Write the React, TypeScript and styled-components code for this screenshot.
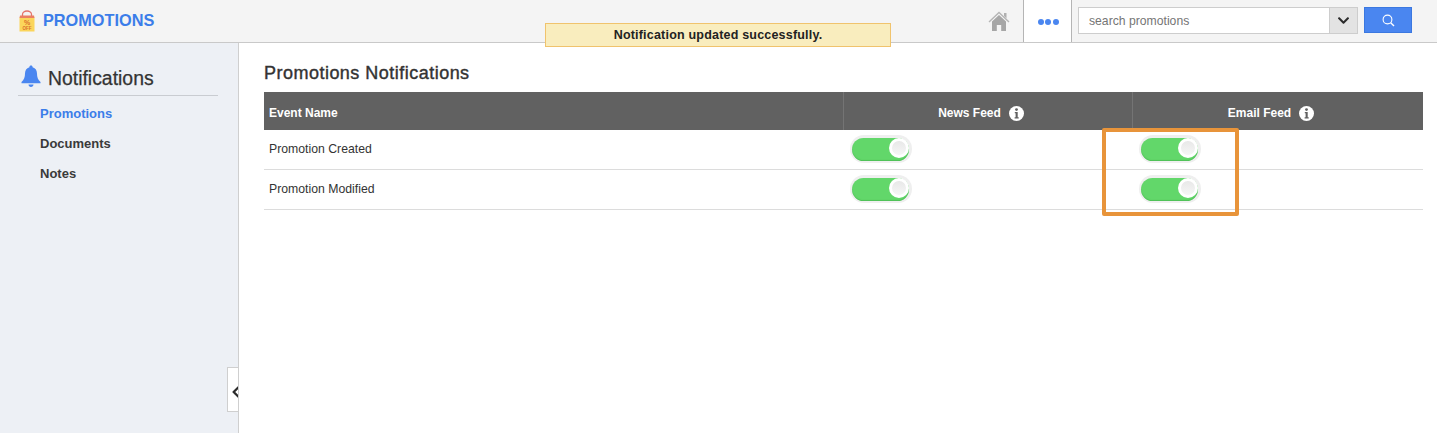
import React from 'react'
import styled, { createGlobalStyle } from 'styled-components'
import { FaChevronDown, FaChevronLeft } from 'react-icons/fa'

const GlobalStyle = createGlobalStyle`
	html, body {
		margin: 0;
		padding: 0;
		background: #fff;
		font-family: "Liberation Sans", Arial, sans-serif;
	}
`

const Page = styled.div`
	position: relative;
	width: 1437px;
	height: 433px;
	overflow: hidden;
	display: flex;
	flex-direction: column;
`

const Header = styled.header`
	display: flex;
	align-items: stretch;
	height: 42px;
	flex: none;
	background: #f4f4f4;
	border-bottom: 1px solid #c9c9c9;
`

const Brand = styled.div`
	display: flex;
	align-items: center;
	gap: 7px;
	padding: 0 0 1px 18px;
	color: #3b7de9;
	font-size: 16.3px;
	font-weight: 700;
	flex: 1;
`

const HomeCell = styled.div`
	display: flex;
	align-items: center;
	justify-content: center;
	width: 22px;
	margin-right: 13px;
`

const MoreCell = styled.div`
	display: flex;
	align-items: center;
	justify-content: center;
	gap: 1.5px;
	width: 49px;
	padding: 2px 0 0 1px;
	box-sizing: border-box;
	background: #fff;
	border-left: 1px solid #b5b5b5;
	border-right: 1px solid #b5b5b5;
`

const Dot = styled.span`
	width: 6px;
	height: 6px;
	border-radius: 50%;
	background: #4a86f0;
`

const SearchBox = styled.div`
	display: flex;
	align-self: flex-start;
	width: 280px;
	height: 27px;
	margin: 7px 6px 0;
	box-sizing: border-box;
	background: #fff;
	border: 1px solid #cdcdcd;
`

const SearchText = styled.div`
	flex: 1;
	padding-left: 10px;
	line-height: 26px;
	font-size: 12.2px;
	color: #757575;
`

const SearchCaret = styled.div`
	display: flex;
	align-items: center;
	justify-content: center;
	width: 27px;
	background: #e3e3e3;
	border-left: 1px solid #cdcdcd;
	color: #2b2b2b;
`

const SearchButton = styled.div`
	display: flex;
	align-items: center;
	justify-content: center;
	align-self: flex-start;
	width: 48px;
	height: 26px;
	margin: 7px 25px 0 0;
	box-sizing: border-box;
	background: #4a86f0;
	border: 1px solid #3b78e0;
`

const Toast = styled.div`
	position: absolute;
	top: 23px;
	left: 545px;
	width: 346px;
	height: 24px;
	box-sizing: border-box;
	border: 1px solid #f0c36d;
	background: #f9edbe;
	color: #222;
	font-size: 12.5px;
	font-weight: 700;
	line-height: 22px;
	letter-spacing: 0.2px;
	text-align: center;
`

const Body = styled.div`
	display: flex;
	flex: 1;
	min-height: 0;
`

const Sidebar = styled.aside`
	position: relative;
	width: 239px;
	flex: none;
	box-sizing: border-box;
	padding: 20px 20px 0 18px;
	background: #edf0f5;
	border-right: 1px solid #cfcfcf;
`

const SideTitle = styled.div`
	display: flex;
	align-items: center;
	gap: 7px;
	height: 32px;
	padding: 0 0 1px 3px;
	box-sizing: content-box;
	margin-top: -1px;
	border-bottom: 1px solid #c9ccd1;
	color: #333;
	font-size: 19.4px;
	-webkit-text-stroke: 0.25px #333;

	svg {
		margin-top: -3px;
	}
`

const SideLink = styled.div<{ $active?: boolean }>`
	height: 30px;
	padding-left: 22px;
	line-height: 30px;
	font-size: 13px;
	font-weight: 700;
	color: ${p => (p.$active ? '#3b7de9' : '#3a3a3a')};
`

const SideLinks = styled.div`
	padding-top: 3px;
`

const CollapseTab = styled.div`
	position: absolute;
	right: 0;
	top: 324px;
	display: flex;
	align-items: center;
	justify-content: flex-start;
	width: 11px;
	height: 45px;
	box-sizing: border-box;
	padding: 4px 0 0 1px;
	background: #fff;
	border: 1px solid #cfcfcf;
	border-right: none;
	color: #2b2b2b;
	overflow: hidden;

	svg {
		flex: none;
	}
`

const Content = styled.main`
	flex: 1;
	padding: 20px 14px 0 25px;
`

const Title = styled.h1`
	margin: 0 0 9px;
	height: 20px;
	line-height: 20px;
	color: #333;
	font-size: 18px;
	font-weight: 400;
	letter-spacing: 0.48px;
	-webkit-text-stroke: 0.4px #333;
`

const Table = styled.div`
	width: 1159px;
`

const Row = styled.div`
	display: grid;
	grid-template-columns: 579px 289px 291px;
	height: 40px;
	box-sizing: border-box;
	border-bottom: 1px solid #dcdcdc;
	color: #333;
	font-size: 12.25px;
`

const HeadRow = styled(Row)`
	height: 38px;
	background: #616161;
	border-bottom: none;
	color: #fff;
	font-size: 12px;
	font-weight: 700;
`

const HeadCell = styled.div<{ $center?: boolean }>`
	display: flex;
	align-items: center;
	justify-content: ${p => (p.$center ? 'center' : 'flex-start')};
	gap: 8px;
	padding-top: 4px;
	padding-left: ${p => (p.$center ? '0' : '5px')};
	padding-right: ${p => (p.$center ? '14px' : '0')};
	border-left: ${p => (p.$center ? '1px solid #747474' : 'none')};
`

const NameCell = styled.div`
	display: flex;
	align-items: center;
	padding-left: 5px;
	padding-bottom: 1px;
`

const ToggleCell = styled.div`
	padding: 5px 0 0 7px;
`

const Toggle = styled.div`
	position: relative;
	width: 62px;
	height: 28px;
	box-sizing: border-box;
	padding: 3px 3px 2px 2px;
	border-radius: 14px;
	background: #efefef;
`

const ToggleTrack = styled.div`
	height: 23px;
	border-radius: 12px;
	background: #62d76a;
	box-shadow: inset 0 -1px 1px rgba(60, 170, 70, 0.5);
`

const ToggleKnob = styled.div`
	position: absolute;
	top: 3px;
	right: 3px;
	width: 20px;
	height: 20px;
	box-sizing: border-box;
	border: 3px solid #fff;
	border-radius: 50%;
	background: linear-gradient(#e8e8e8, #f6f6f6);
`

const Highlight = styled.div`
	position: absolute;
	left: 1102px;
	top: 128px;
	width: 137px;
	height: 88px;
	box-sizing: border-box;
	border: 4px solid #e8943a;
	border-radius: 2px;
`

const BagIcon = () => (
	<svg width="18" height="22" viewBox="0 0 18 22">
		<path d="M4.500 7V4.500C4.500 2.500 6.500 1 9 1s4.500 1.500 4.500 3.500V7" fill="none" stroke="#e4736a" strokeWidth="1.3" />
		<path d="M1.500 7.500h15v14h-15z" fill="#fbd55b" />
		<path d="M2 5.500h14l0.500 2.500H1.500z" fill="#ea7f63" />
		<text x="9" y="14.500" textAnchor="middle" fontSize="7" fontWeight="700" fill="#d9702b">%</text>
		<text x="9" y="19.500" textAnchor="middle" fontSize="4.500" fontWeight="700" fill="#d9702b">OFF</text>
	</svg>
)

const HomeIcon = () => (
	<svg width="22" height="21" viewBox="0 0 22 21">
		<path d="M1 11L11 1.500 21 11" fill="none" stroke="#b5b5b5" strokeWidth="1.400" />
		<path d="M16 2h2.500v5.500L16 5z" fill="#b0b0b0" />
		<path d="M4 10.500L11 4l7 6.500V20h-4.800v-6H8.800v6H4z" fill="#a6a6a6" />
	</svg>
)

const BellIcon = () => (
	<svg width="20" height="23" viewBox="0 0 20 23">
		<path
			d="M10 0.500c1 0 1.600 0.700 1.600 1.700 3 0.800 4.400 3.300 4.400 6.300 0 3.700 0.900 6.300 3.500 8.600v1.100H0.500v-1.100C3.100 14.800 4 12.200 4 8.500c0-3 1.400-5.500 4.400-6.300C8.400 1.200 9 0.500 10 0.500zM7.500 19.500h5c0 1.400-1.100 2.500-2.500 2.500s-2.500-1.100-2.500-2.500z"
			fill="#4a86f0"
		/>
	</svg>
)

const SearchIcon = () => (
	<svg width="13" height="13" viewBox="0 0 13 13" fill="none" stroke="#fff">
		<circle cx="5.500" cy="5.500" r="4.400" strokeWidth="1.100" />
		<path d="M8.700 8.700L12 12" strokeWidth="1.400" />
	</svg>
)

const InfoIcon = () => (
	<svg width="15" height="15" viewBox="0 0 15 15">
		<circle cx="7.500" cy="7.500" r="7.500" fill="#fff" />
		<circle cx="7.500" cy="3.600" r="1.400" fill="#616161" />
		<path d="M5.800 6h2.900v5.200h1v1.300H5.600v-1.300h1V7.300h-0.800z" fill="#616161" />
	</svg>
)

const EVENTS = ['Promotion Created', 'Promotion Modified']

const Switch = () => (
	<Toggle>
		<ToggleTrack />
		<ToggleKnob />
	</Toggle>
)

const App = () => {
	return (
		<Page>
			<GlobalStyle />
			<Header>
				<Brand>
					<BagIcon />
					PROMOTIONS
				</Brand>
				<HomeCell>
					<HomeIcon />
				</HomeCell>
				<MoreCell>
					<Dot />
					<Dot />
					<Dot />
				</MoreCell>
				<SearchBox>
					<SearchText>search promotions</SearchText>
					<SearchCaret>
						<FaChevronDown size={13} />
					</SearchCaret>
				</SearchBox>
				<SearchButton>
					<SearchIcon />
				</SearchButton>
			</Header>
			<Body>
				<Sidebar>
					<SideTitle>
						<BellIcon />
						Notifications
					</SideTitle>
					<SideLinks>
						<SideLink $active>Promotions</SideLink>
						<SideLink>Documents</SideLink>
						<SideLink>Notes</SideLink>
					</SideLinks>
					<CollapseTab>
						<FaChevronLeft size={14} />
					</CollapseTab>
				</Sidebar>
				<Content>
					<Title>Promotions Notifications</Title>
					<Table>
						<HeadRow>
							<HeadCell>Event Name</HeadCell>
							<HeadCell $center>
								News Feed <InfoIcon />
							</HeadCell>
							<HeadCell $center>
								Email Feed <InfoIcon />
							</HeadCell>
						</HeadRow>
						{EVENTS.map(name => (
							<Row key={name}>
								<NameCell>{name}</NameCell>
								<ToggleCell>
									<Switch />
								</ToggleCell>
								<ToggleCell>
									<Switch />
								</ToggleCell>
							</Row>
						))}
					</Table>
				</Content>
			</Body>
			<Toast>Notification updated successfully.</Toast>
			<Highlight />
		</Page>
	)
}

export default App
